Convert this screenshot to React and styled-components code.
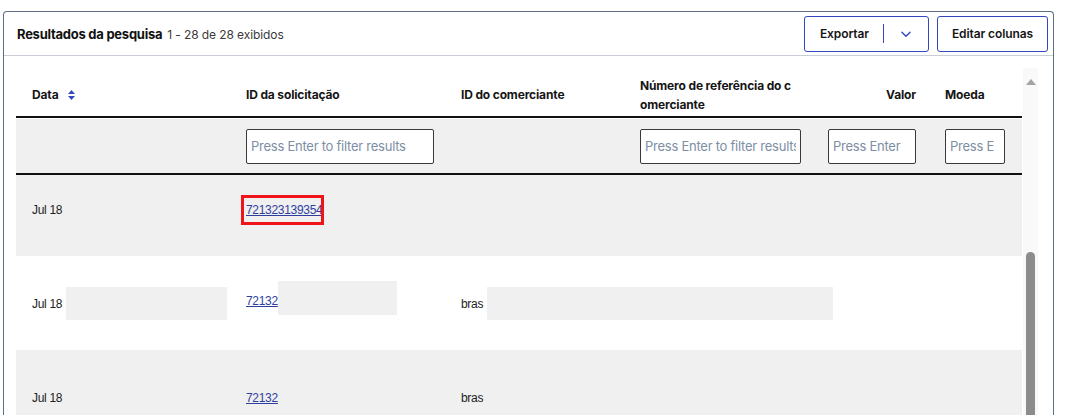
import React from "react";
import styled, { createGlobalStyle } from "styled-components";

const GlobalStyle = createGlobalStyle`
  html, body {
    margin: 0;
    padding: 0;
    background: #ffffff;
    overflow: hidden;
  }
  body {
    font-family: Inter, "Noto Sans", sans-serif;
    color: #1b1b1b;
  }
`;

const Card = styled.section`
  margin: 11px 0 0 3px;
  width: 1051px;
  height: 420px;
  border: 1px solid #5b6e86;
  border-bottom: none;
  border-radius: 4px 4px 0 0;
  box-sizing: border-box;
`;

const CardHeader = styled.header`
  height: 44px;
  display: flex;
  align-items: center;
  justify-content: space-between;
  padding: 0 5px 0 13px;
  border-bottom: 1px solid #c9ced6;
  box-sizing: border-box;
`;

const Title = styled.div`
  display: flex;
  align-items: baseline;
  gap: 5px;
  font-size: 13px;
  font-weight: 700;
  letter-spacing: -0.25px;
  color: #111;
  span {
    font-weight: 400;
    font-size: 12px;
    color: #3a3a3a;
    letter-spacing: -0.1px;
  }
`;

const Actions = styled.div`
  display: flex;
  gap: 8px;
`;

const OutlineButton = styled.button`
  height: 36px;
  display: flex;
  align-items: center;
  background: #fff;
  border: 1px solid #3347c0;
  border-radius: 3px;
  padding: 0 ${(p) => p.$pad || 14}px;
  font-family: Inter, sans-serif;
  font-size: 12px;
  font-weight: 600;
  color: #151515;
  letter-spacing: -0.1px;
`;

const SplitDivider = styled.span`
  width: 1px;
  height: 19px;
  background: #3347c0;
  margin: 0 15px 0 14px;
`;

const Body = styled.div`
  display: flex;
  padding-left: 12px;
  gap: 1px;
`;

const Table = styled.div`
  width: 1006px;
`;

const columns = "214px 215px 179px 188px 117px 93px";

const HeadRow = styled.div`
  display: grid;
  grid-template-columns: ${columns};
  height: 62px;
  border-bottom: 2px solid #111;
  box-sizing: border-box;
  padding-top: 17px;
`;

const HeadCell = styled.div`
  display: flex;
  align-items: center;
  justify-content: ${(p) => (p.$right ? "flex-end" : "flex-start")};
  padding: 0 ${(p) => (p.$right ? 13 : 0)}px 0 16px;
  font-size: 12px;
  font-weight: 700;
  line-height: 19px;
  letter-spacing: -0.15px;
  color: #151515;
`;

const SortIcon = styled.svg`
  margin-left: 10px;
  flex: none;
`;

const FilterRow = styled.div`
  display: grid;
  grid-template-columns: ${columns};
  align-items: center;
  height: 56px;
  margin-top: 1px;
  background: #f0f0f0;
  border-bottom: 2px solid #111;
  box-sizing: border-box;
`;

const FilterCell = styled.div`
  display: flex;
  justify-content: ${(p) => (p.$right ? "flex-end" : "flex-start")};
  padding: 0 ${(p) => (p.$right ? 13 : 0)}px 0 16px;
`;

const FilterInput = styled.input`
  width: ${(p) => p.$w}px;
  height: 35px;
  box-sizing: border-box;
  border: 1px solid #3a3a3a;
  border-radius: 2px;
  background: #fff;
  padding: 0 4px;
  font-family: Inter, sans-serif;
  font-size: 13px;
  letter-spacing: -0.25px;
  &::placeholder {
    color: #7d8ea5;
  }
`;

const Row = styled.div`
  display: grid;
  grid-template-columns: ${columns};
  align-items: start;
  height: ${(p) => p.$h}px;
  padding-top: ${(p) => p.$top}px;
  box-sizing: border-box;
  background: ${(p) => (p.$shaded ? "#f0f0f0" : "#ffffff")};
`;

const Cell = styled.div`
  display: flex;
  align-items: center;
  min-height: ${(p) => p.$minH || 0}px;
  grid-column: ${(p) => p.$span || "auto"};
  padding-left: 16px;
  font-family: "Liberation Sans", Arial, sans-serif;
  font-size: 12px;
  color: #222;
  letter-spacing: -0.3px;
  min-width: 0;
`;

const Redacted = styled.span`
  display: block;
  width: ${(p) => p.$w}px;
  height: ${(p) => p.$h || 33}px;
  margin-top: ${(p) => p.$dy || 0}px;
  margin-left: ${(p) => p.$dx || 0}px;
  background: #f0f0f0;
  flex: none;
`;

const IdLink = styled.a`
  color: #2f3f9e;
  text-decoration: underline;
  white-space: nowrap;
  cursor: pointer;
`;

const Highlight = styled.span`
  display: inline-block;
  width: 83px;
  height: 30px;
  box-sizing: border-box;
  margin-left: -5px;
  padding-left: 2px;
  border: 3px solid #f0141a;
  overflow: hidden;
  white-space: nowrap;
  line-height: 24px;
`;

const Scrollbar = styled.div`
  width: 15px;
  margin-top: 12px;
  background: #f9f9f9;
  display: flex;
  flex-direction: column;
  align-items: center;
`;

const ArrowUp = styled.span`
  width: 0;
  height: 0;
  margin-top: 11px;
  border-left: 5px solid transparent;
  border-right: 5px solid transparent;
  border-bottom: 6px solid #a3a3a3;
`;

const Thumb = styled.span`
  width: 9px;
  height: 200px;
  margin-top: 167px;
  border-radius: 5px 5px 0 0;
  background: #8c8c8c;
`;

export default function App() {
  return (
    <>
      <GlobalStyle />
      <Card>
        <CardHeader>
          <Title>
            Resultados da pesquisa <span>1 - 28 de 28 exibidos</span>
          </Title>
          <Actions>
            <OutlineButton $pad={15}>
              Exportar
              <SplitDivider />
              <svg width="14" height="14" viewBox="0 0 24 24" fill="none" stroke="#3347c0" strokeWidth="2.4" strokeLinecap="round" strokeLinejoin="round">
                <path d="M5 9l7 7 7-7" />
              </svg>
            </OutlineButton>
            <OutlineButton $pad={14}>Editar colunas</OutlineButton>
          </Actions>
        </CardHeader>
        <Body>
          <Table>
            <HeadRow>
              <HeadCell>
                Data
                <SortIcon width="7" height="10" viewBox="0 0 7 10">
                  <path d="M3.5 0L7 4H0z M3.5 10L0 6h7z" fill="#3347c0" />
                </SortIcon>
              </HeadCell>
              <HeadCell>ID da solicitação</HeadCell>
              <HeadCell>ID do comerciante</HeadCell>
              <HeadCell>
                Número de referência do c<br />
                omerciante
              </HeadCell>
              <HeadCell $right>Valor</HeadCell>
              <HeadCell>Moeda</HeadCell>
            </HeadRow>
            <FilterRow>
              <FilterCell />
              <FilterCell>
                <FilterInput $w={188} placeholder="Press Enter to filter results" />
              </FilterCell>
              <FilterCell />
              <FilterCell>
                <FilterInput $w={161} placeholder="Press Enter to filter results" />
              </FilterCell>
              <FilterCell $right>
                <FilterInput $w={88} placeholder="Press Enter" />
              </FilterCell>
              <FilterCell>
                <FilterInput $w={60} placeholder="Press E" />
              </FilterCell>
            </FilterRow>
            <Row $shaded $h={81} $top={20}>
              <Cell $minH={30}>Jul 18</Cell>
              <Cell $minH={30}>
                <Highlight>
                  <IdLink>721323139354</IdLink>
                </Highlight>
              </Cell>
            </Row>
            <Row $h={94} $top={31}>
              <Cell>
                Jul 18 <Redacted $w={161} $dx={4} />
              </Cell>
              <Cell>
                <IdLink>72132</IdLink>
                <Redacted $w={119} $h={34} $dy={-6} />
              </Cell>
              <Cell $span="3 / 6">
                bras <Redacted $w={346} $dx={4} />
              </Cell>
            </Row>
            <Row $shaded $h={80} $top={41}>
              <Cell>Jul 18</Cell>
              <Cell>
                <IdLink>72132</IdLink>
              </Cell>
              <Cell>bras</Cell>
            </Row>
          </Table>
          <Scrollbar>
            <ArrowUp />
            <Thumb />
          </Scrollbar>
        </Body>
      </Card>
    </>
  );
}
